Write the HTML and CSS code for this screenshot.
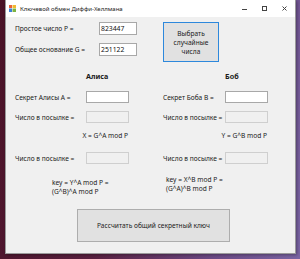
FILE: index.html
```html
<!DOCTYPE html>
<html lang="ru">
<head>
<meta charset="utf-8">
<link rel="stylesheet" href="styles.css">
</head>
<body>
<div class="window">
  <div class="titlebar">
    <svg class="appicon" width="7" height="7" viewBox="0 0 7 7">
      <rect x="0" y="0" width="3" height="3" fill="#e8623a"/>
      <rect x="3.5" y="0" width="3.5" height="3" fill="#f2b830"/>
      <rect x="0" y="3.5" width="3" height="3.5" fill="#3a7fd8"/>
      <rect x="3.5" y="3.5" width="3.5" height="3.5" fill="#7cb342"/>
    </svg>
    <span class="title">Ключевой обмен Диффи-Хеллмана</span>
    <div class="controls">
      <svg width="20" height="17" viewBox="0 0 20 17"><line x1="7" y1="9.5" x2="12" y2="9.5" stroke="#444" stroke-width="1"/></svg>
      <svg width="20" height="17" viewBox="0 0 20 17"><rect x="7.5" y="6.5" width="4" height="4" fill="none" stroke="#444" stroke-width="1"/></svg>
      <svg width="20" height="17" viewBox="0 0 20 17"><path d="M7.5 6.5 L11.5 10.5 M11.5 6.5 L7.5 10.5" stroke="#444" stroke-width="1"/></svg>
    </div>
  </div>
  <div class="content">
    <div class="top">
      <div class="params">
        <span class="lbl">Простое число P =</span><div class="tb">823447</div>
        <span class="lbl">Общее основание G =</span><div class="tb">251122</div>
      </div>
      <button class="btn btn-rand">Выбрать случайные числа</button>
    </div>
    <div class="parties">
      <div class="party alice">
        <div class="head">Алиса</div>
        <div class="row row1"><span class="lbl">Секрет Алисы А =</span><div class="tb"></div></div>
        <div class="row row2"><span class="lbl">Число в посылке =</span><div class="tb dis"></div></div>
        <div class="formula">X = G^A mod P</div>
        <div class="row row3"><span class="lbl">Число в посылке =</span><div class="tb dis"></div></div>
        <div class="key">key = Y^A mod P =<br>(G^B)^A mod P</div>
      </div>
      <div class="party bob">
        <div class="head">Боб</div>
        <div class="row row1"><span class="lbl">Секрет Боба B =</span><div class="tb"></div></div>
        <div class="row row2"><span class="lbl">Число в посылке =</span><div class="tb dis"></div></div>
        <div class="formula">Y = G^B mod P</div>
        <div class="row row3"><span class="lbl">Число в посылке =</span><div class="tb dis"></div></div>
        <div class="key">key = X^B mod P =<br>(G^A)^B mod P</div>
      </div>
    </div>
    <button class="btn btn-calc">Рассчитать общий секретный ключ</button>
  </div>
</div>
</body>
</html>
```
FILE: styles.css
```css
* { box-sizing: border-box; }
html, body { margin: 0; padding: 0; }
body {
  width: 300px;
  height: 259px;
  overflow: hidden;
  background: linear-gradient(100deg, #4a1226 0%, #5a2040 40%, #6c4a86 75%, #7a64a4 100%);
  font-family: "Noto Sans", "DejaVu Sans", sans-serif;
  font-size: 6.6px;
  color: #1a1a1a;
}
.window {
  margin-left: 5px;
  width: 291px;
  height: 254px;
  background: #f0f0f0;
  border: 1px solid #9a9a9a;
  border-top: none;
  box-shadow: 1px 1px 3px rgba(0,0,0,0.35);
}
.titlebar {
  height: 17px;
  background: #fff;
  display: flex;
  align-items: center;
}
.appicon { margin-left: 3px; margin-right: 4px; }
.title { font-size: 6px; color: #222; }
.controls { margin-left: auto; display: flex; }
.controls svg { display: block; }
.content { padding: 5px 0 0 9px; }
.lbl { white-space: nowrap; }
.top { display: flex; align-items: flex-start; }
.params {
  display: grid;
  grid-template-columns: 84px 38px;
  grid-auto-rows: 13px;
  row-gap: 8px;
  align-items: center;
}
.tb {
  height: 13px;
  background: #fff;
  border: 1px solid #a8a8a8;
  font-size: 6.8px;
  line-height: 11px;
  padding-left: 1px;
  color: #111;
}
.tb.dis { background: #f0f0f0; border-color: #cfcfcf; }
.btn {
  font-family: inherit;
  font-size: 6.6px;
  color: #1a1a1a;
  background: #e1e1e1;
  border: 1px solid #adadad;
  padding: 0;
}
.btn-rand {
  margin-left: 26px;
  width: 56px;
  height: 40px;
  border-color: #2d88dc;
  line-height: 9px;
  padding: 0 6px;
}
.parties {
  margin-top: 8px;
  height: 139px;
  display: flex;
}
.party { display: flex; flex-direction: column; }
.alice { width: 114px; }
.bob { width: 105px; margin-left: 34px; }
.row { display: grid; align-items: center; height: 12px; }
.row .tb { height: 12px; }
.alice .row { grid-template-columns: 71px 43px; }
.bob .row { grid-template-columns: 62px 43px; }
.head {
  height: 12px;
  line-height: 12px;
  font-weight: bold;
  font-size: 7.2px;
}
.alice .head { padding-left: 71px; }
.bob .head { padding-left: 62px; }
.row1 { margin-top: 9px; }
.row2 { margin-top: 8px; }
.formula { margin-top: 8px; line-height: 10px; height: 10px; text-align: right; padding-right: 1px; }
.row3 { margin-top: 11px; }
.key { line-height: 9px; }
.alice .key { margin-top: 14px; padding-left: 37px; }
.bob .key { margin-top: 11px; padding-left: 3px; }
.btn-calc {
  display: block;
  margin-left: 62px;
  width: 153px;
  height: 33px;
}
```
